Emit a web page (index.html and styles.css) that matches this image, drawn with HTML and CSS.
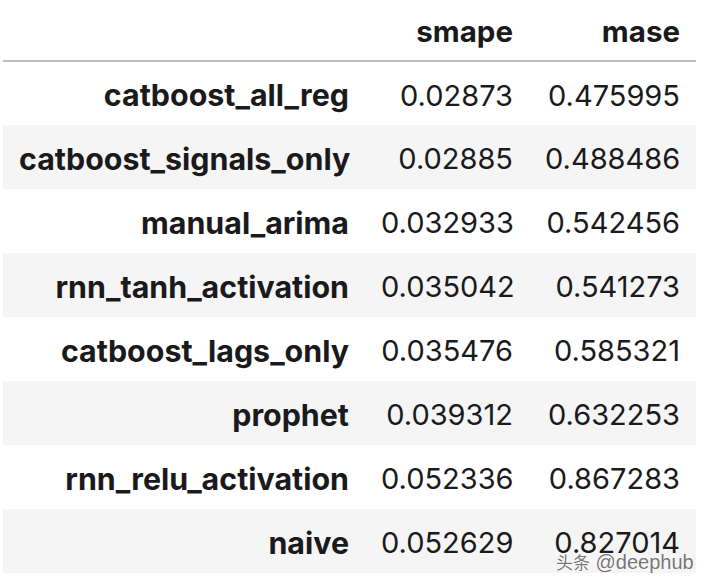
FILE: index.html
```html
<!DOCTYPE html>
<html>
<head>
<meta charset="utf-8">
<link rel="stylesheet" href="styles.css">
</head>
<body>
<div class="frame">
  <table class="df">
    <colgroup>
      <col class="c-idx">
      <col class="c-num">
      <col class="c-num2">
    </colgroup>
    <thead>
      <tr>
        <th></th>
        <th>smape</th>
        <th>mase</th>
      </tr>
    </thead>
    <tbody>
      <tr><th>catboost_all_reg</th><td>0.02873</td><td>0.475995</td></tr>
      <tr><th>catboost_signals_only</th><td>0.02885</td><td>0.488486</td></tr>
      <tr><th>manual_arima</th><td>0.032933</td><td>0.542456</td></tr>
      <tr><th>rnn_tanh_activation</th><td>0.035042</td><td>0.541273</td></tr>
      <tr><th>catboost_lags_only</th><td>0.035476</td><td>0.585321</td></tr>
      <tr><th>prophet</th><td>0.039312</td><td>0.632253</td></tr>
      <tr><th>rnn_relu_activation</th><td>0.052336</td><td>0.867283</td></tr>
      <tr><th>naive</th><td>0.052629</td><td>0.827014</td></tr>
    </tbody>
  </table>
  <div class="watermark"><span class="wm-cjk">头条</span> @deephub</div>
</div>
</body>
</html>
```
FILE: styles.css
```css
html, body {
  margin: 0;
  padding: 0;
  background: #ffffff;
}

.frame {
  position: relative;
  width: 710px;
  height: 586px;
  padding-left: 3px;
  box-sizing: border-box;
}

.df {
  border-collapse: collapse;
  table-layout: fixed;
  width: 693px;
  font-family: "Inter", "Liberation Sans", sans-serif;
  font-size: 29px;
  color: #1a1a1c;
}

.c-idx { width: 362px; }
.c-num { width: 164px; }
.c-num2 { width: 167px; }

.df th,
.df td {
  text-align: right;
  padding: 0 16px;
  white-space: nowrap;
}

.df thead tr {
  height: 61px;
}

.df thead th {
  font-weight: 700;
  font-size: 29.5px;
  padding-top: 2px;
  border-bottom: 2px solid #bdbdbd;
}

.df tbody tr {
  height: 64px;
}

.df tbody th {
  font-weight: 700;
  font-size: 30.4px;
  padding-top: 3px;
}

.df td {
  font-weight: 400;
  padding-top: 3px;
}

.df tbody tr:nth-child(even) {
  background: #f5f5f5;
}

.watermark {
  position: absolute;
  left: 556px;
  top: 550px;
  white-space: nowrap;
  font-family: "Liberation Sans", "Noto Sans CJK SC", sans-serif;
  font-size: 20px;
  line-height: 24px;
  color: rgba(80, 80, 80, 0.8);
  text-shadow: 0 0 1px #fff, 0 0 2px #fff;
}

.wm-cjk {
  font-family: "Noto Sans CJK SC", sans-serif;
  font-size: 17px;
}
```
